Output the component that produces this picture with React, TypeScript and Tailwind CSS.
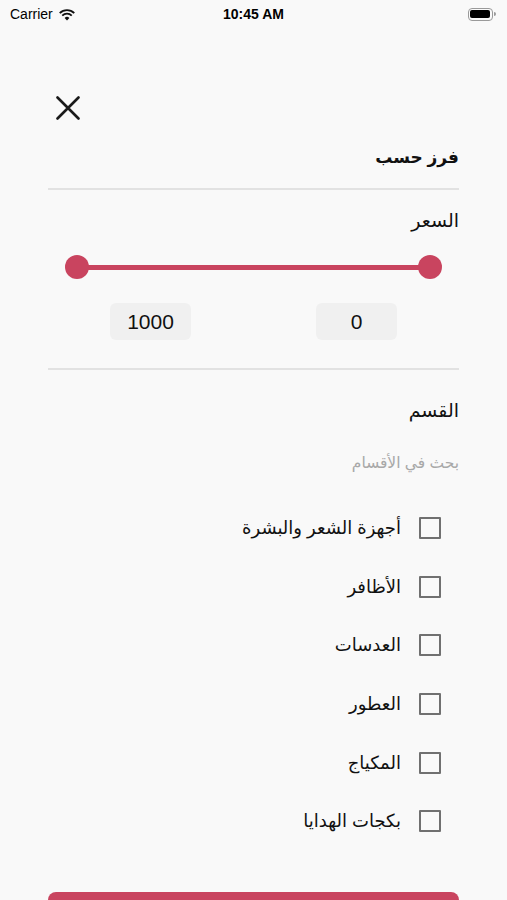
const categories = [
  "أجهزة الشعر والبشرة",
  "الأظافر",
  "العدسات",
  "العطور",
  "المكياج",
  "بكجات الهدايا",
];

function StatusBar() {
  return (
    <div className="flex h-7 items-center justify-between px-[10px] text-[14px] text-black [font-family:'Liberation_Sans',Arial,sans-serif]">
      <div className="flex w-[120px] items-center gap-[5px]">
        <span>Carrier</span>
        <svg width="18" height="13" viewBox="0 0 18 13" fill="#111">
          <path d="M9 12.5 6.6 9.9a3.4 3.4 0 0 1 4.8 0Z" />
          <path d="M4.9 8.2a5.8 5.8 0 0 1 8.2 0l1.3-1.3a7.7 7.7 0 0 0-10.8 0Z" />
          <path d="M2.4 5.7a9.3 9.3 0 0 1 13.2 0l1.3-1.3a11.2 11.2 0 0 0-15.8 0Z" />
        </svg>
      </div>
      <span className="font-semibold">10:45 AM</span>
      <div className="flex w-[120px] items-center justify-end pr-[1px]">
        <div className="flex h-[13px] w-[25px] items-center rounded-[4px] border border-[#9a9a9a] p-[1.5px]">
          <div className="h-full w-full rounded-[2px] bg-black" />
        </div>
        <div className="ml-[1px] h-[4px] w-[2px] rounded-r-sm bg-[#9a9a9a]" />
      </div>
    </div>
  );
}

function Divider() {
  return <div className="h-[2px] bg-[#e2e2e2]" />;
}

export default function App() {
  return (
    <div className="min-h-[900px] overflow-hidden bg-[#f9f9f9] text-[#111] [font-family:'Liberation_Sans','DejaVu_Sans',sans-serif]">
      <StatusBar />
      <div className="px-12">
        <div className="mt-[68px] h-6 pl-2">
          <svg width="24" height="24" viewBox="0 0 24 24" stroke="#1a1a1a" strokeWidth="2.6" strokeLinecap="round">
            <path d="M1.5 1.5 22.5 22.5M22.5 1.5 1.5 22.5" />
          </svg>
        </div>

        <div dir="rtl">
          <div className="mt-[26px] h-6 text-[17px] font-bold leading-6">فرز حسب</div>
          <div className="mt-[18px]">
            <Divider />
          </div>

          {/* price */}
          <div className="mt-[19px] h-6 text-[19px] leading-6">السعر</div>
          <div className="mt-[22px] flex h-6 items-center px-[17px]">
            <div className="h-6 w-6 shrink-0 rounded-full bg-[#c9445f]" />
            <div className="-mx-1 h-[5px] flex-1 bg-[#c9445f]" />
            <div className="h-6 w-6 shrink-0 rounded-full bg-[#c9445f]" />
          </div>
          <div className="mt-6 flex h-[37px] justify-between px-[62px]">
            <div className="flex w-[81px] items-center justify-center rounded-md bg-[#f0f0f0] text-[21px] [font-family:'Liberation_Sans',sans-serif]">
              0
            </div>
            <div className="flex w-[81px] items-center justify-center rounded-md bg-[#f0f0f0] text-[21px] [font-family:'Liberation_Sans',sans-serif]">
              1000
            </div>
          </div>
          <div className="mt-[28px]">
            <Divider />
          </div>

          {/* category */}
          <div className="mt-[29px] h-6 text-[19px] leading-6">القسم</div>
          <div className="mt-[30px] h-5 text-[15.5px] leading-5 text-[#a8a8a8]">بحث في الأقسام</div>

          <div className="mt-[26px]">
            {categories.map((c) => (
              <div key={c} className="flex h-[58.6px] items-center gap-[18px] pr-[18px]">
                <div className="h-[22px] w-[22px] shrink-0 rounded-[1px] border-2 border-[#707070]" />
                <span className="text-[18px] leading-6">{c}</span>
              </div>
            ))}
          </div>
        </div>

        <div className="mt-[41px] h-12 rounded-lg bg-[#c9445f]" />
      </div>
    </div>
  );
}
